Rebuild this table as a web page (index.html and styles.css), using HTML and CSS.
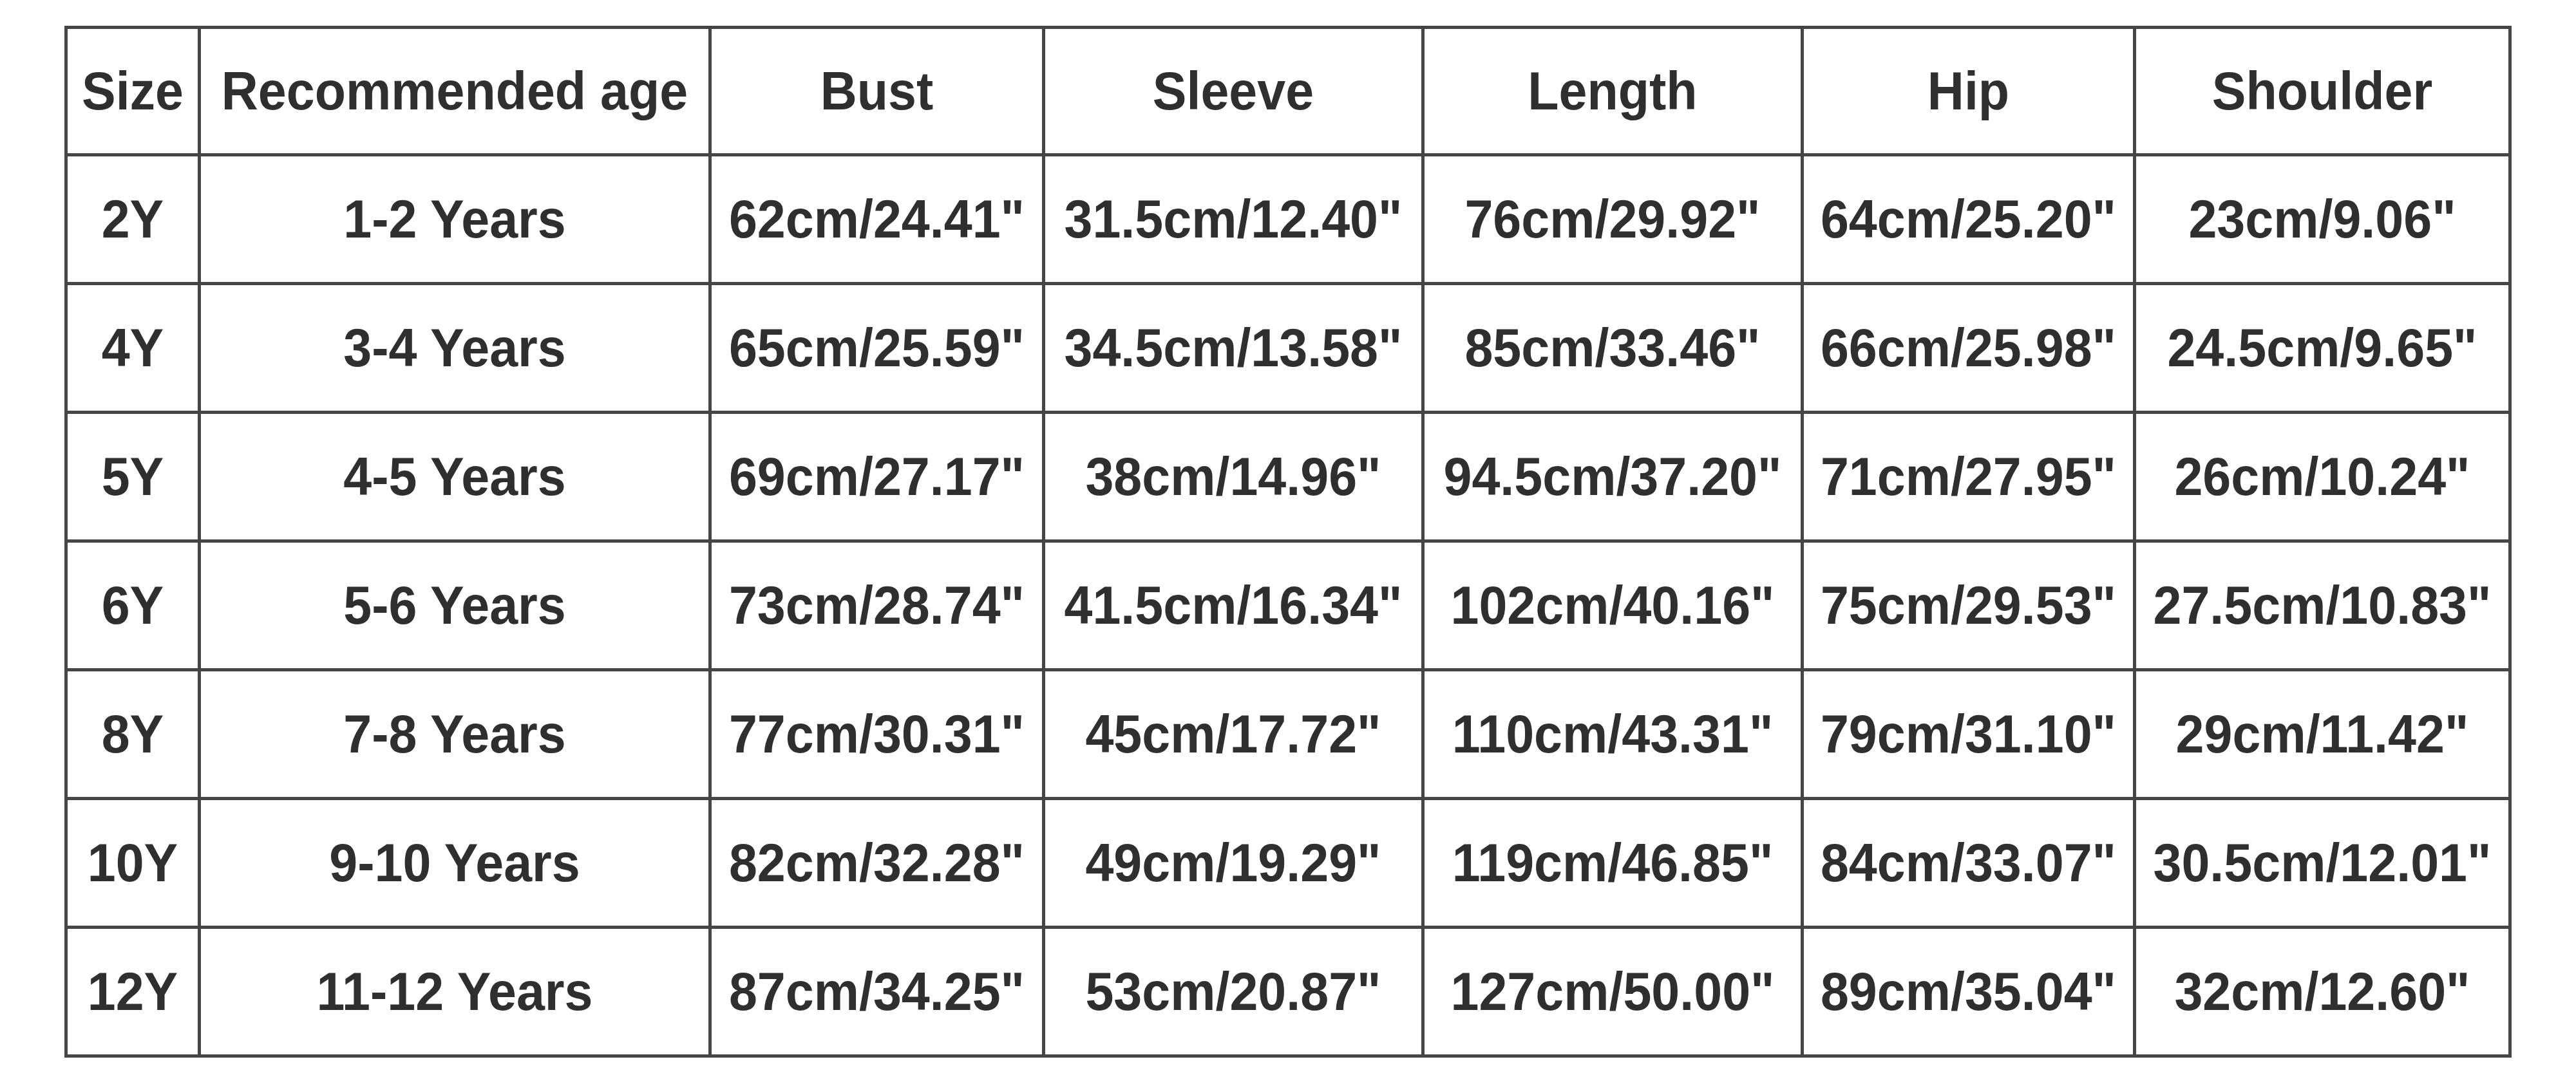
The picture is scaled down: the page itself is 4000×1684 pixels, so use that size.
FILE: index.html
```html
<!DOCTYPE html>
<html lang="en">
<head>
<meta charset="utf-8">
<title>Size chart</title>
<link rel="stylesheet" href="styles.css">
</head>
<body>
<table class="chart">
  <colgroup>
    <col class="c-size">
    <col class="c-age">
    <col class="c-bust">
    <col class="c-sleeve">
    <col class="c-length">
    <col class="c-hip">
    <col class="c-shoulder">
  </colgroup>
  <thead>
    <tr class="head">
      <th><span>Size</span></th>
      <th><span>Recommended age</span></th>
      <th><span>Bust</span></th>
      <th><span>Sleeve</span></th>
      <th><span>Length</span></th>
      <th><span>Hip</span></th>
      <th><span>Shoulder</span></th>
    </tr>
  </thead>
  <tbody>
    <tr>
      <td><span>2Y</span></td>
      <td><span>1-2 Years</span></td>
      <td><span>62cm/24.41"</span></td>
      <td><span>31.5cm/12.40"</span></td>
      <td><span>76cm/29.92"</span></td>
      <td><span>64cm/25.20"</span></td>
      <td><span>23cm/9.06"</span></td>
    </tr>
    <tr>
      <td><span>4Y</span></td>
      <td><span>3-4 Years</span></td>
      <td><span>65cm/25.59"</span></td>
      <td><span>34.5cm/13.58"</span></td>
      <td><span>85cm/33.46"</span></td>
      <td><span>66cm/25.98"</span></td>
      <td><span>24.5cm/9.65"</span></td>
    </tr>
    <tr>
      <td><span>5Y</span></td>
      <td><span>4-5 Years</span></td>
      <td><span>69cm/27.17"</span></td>
      <td><span>38cm/14.96"</span></td>
      <td><span>94.5cm/37.20"</span></td>
      <td><span>71cm/27.95"</span></td>
      <td><span>26cm/10.24"</span></td>
    </tr>
    <tr>
      <td><span>6Y</span></td>
      <td><span>5-6 Years</span></td>
      <td><span>73cm/28.74"</span></td>
      <td><span>41.5cm/16.34"</span></td>
      <td><span>102cm/40.16"</span></td>
      <td><span>75cm/29.53"</span></td>
      <td><span>27.5cm/10.83"</span></td>
    </tr>
    <tr>
      <td><span>8Y</span></td>
      <td><span>7-8 Years</span></td>
      <td><span>77cm/30.31"</span></td>
      <td><span>45cm/17.72"</span></td>
      <td><span>110cm/43.31"</span></td>
      <td><span>79cm/31.10"</span></td>
      <td><span>29cm/11.42"</span></td>
    </tr>
    <tr>
      <td><span>10Y</span></td>
      <td><span>9-10 Years</span></td>
      <td><span>82cm/32.28"</span></td>
      <td><span>49cm/19.29"</span></td>
      <td><span>119cm/46.85"</span></td>
      <td><span>84cm/33.07"</span></td>
      <td><span>30.5cm/12.01"</span></td>
    </tr>
    <tr>
      <td><span>12Y</span></td>
      <td><span>11-12 Years</span></td>
      <td><span>87cm/34.25"</span></td>
      <td><span>53cm/20.87"</span></td>
      <td><span>127cm/50.00"</span></td>
      <td><span>89cm/35.04"</span></td>
      <td><span>32cm/12.60"</span></td>
    </tr>
  </tbody>
</table>
</body>
</html>
```

FILE: styles.css
```css
html, body {
  margin: 0;
  padding: 0;
  background: #ffffff;
}

body {
  padding: 40px 0 0 100px;
  font-family: "Liberation Sans", Arial, sans-serif;
}

.chart {
  border-collapse: separate;
  border-spacing: 0;
  table-layout: fixed;
  width: 3800px;
  border-left: 5px solid #454545;
  border-top: 5px solid #454545;
}

.c-size { width: 207px; }
.c-age { width: 793px; }
.c-bust { width: 518px; }
.c-sleeve { width: 589px; }
.c-length { width: 589px; }
.c-hip { width: 516px; }
.c-shoulder { width: 583px; }

.chart th,
.chart td {
  box-sizing: border-box;
  height: 200px;
  padding: 0;
  border-right: 5px solid #454545;
  border-bottom: 5px solid #454545;
  text-align: center;
  vertical-align: middle;
  font-size: 79px;
  font-weight: bold;
  color: #2f2f2f;
  white-space: nowrap;
  overflow: hidden;
  line-height: 1;
}

.chart .head th {
  height: 198px;
}

.chart th span,
.chart td span {
  display: inline-block;
  transform: scaleY(1.05);
}
```
